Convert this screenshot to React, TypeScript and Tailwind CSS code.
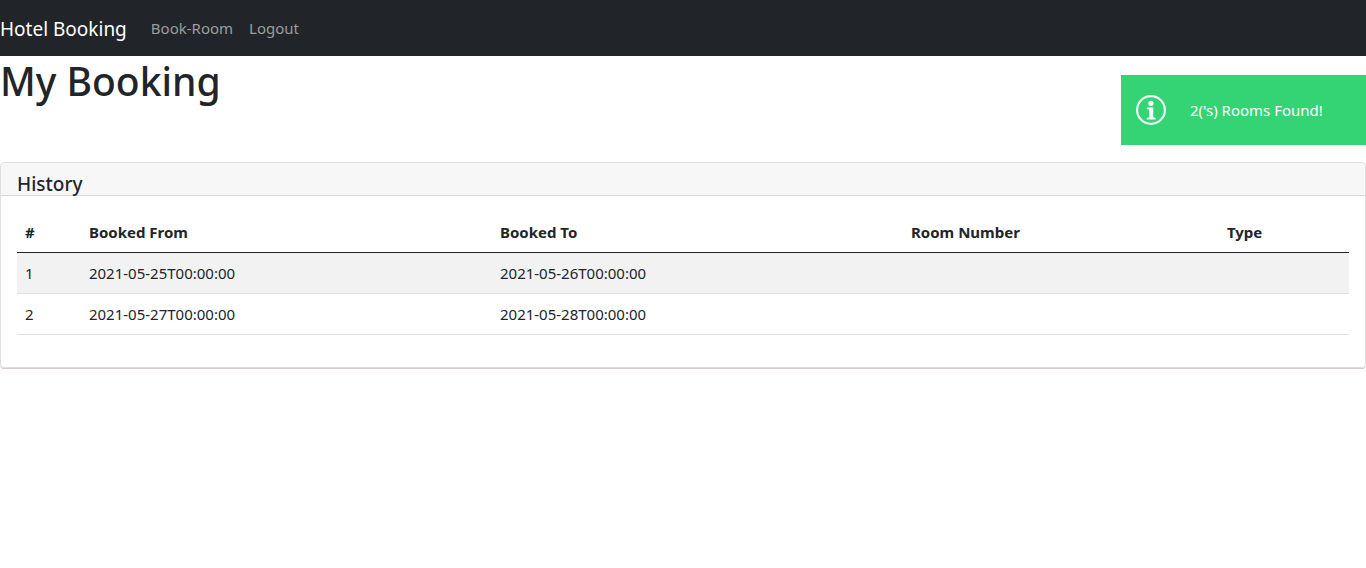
const bookings = [
  { id: 1, from: "2021-05-25T00:00:00", to: "2021-05-26T00:00:00", room: "", type: "" },
  { id: 2, from: "2021-05-27T00:00:00", to: "2021-05-28T00:00:00", room: "", type: "" },
];

function InfoIcon() {
  return (
    <svg className="size-[30px] shrink-0" viewBox="0 0 30 30" aria-hidden="true">
      <circle cx="15" cy="15" r="13.9" fill="none" stroke="#fff" strokeOpacity="0.9" strokeWidth="2.2" />
      <circle cx="14.9" cy="8.4" r="2.6" fill="#fff" fillOpacity="0.95" />
      <path d="M10.8 12.4h6.5v9.8l2.4.7v1.5h-9v-1.5l2.5-.7v-7.5l-2.4-.7z" fill="#fff" fillOpacity="0.95" />
    </svg>
  );
}

function Navbar() {
  return (
    <nav className="flex h-14 items-center bg-[#212529]">
      <a href="#" className="mr-4 pt-0.5 text-[19px] leading-[30px] text-white">
        Hotel Booking
      </a>
      <a href="#book-room" className="px-2 text-[#9b9d9e]">
        Book-Room
      </a>
      <a href="#logout" className="px-2 text-[#9b9d9e]">
        Logout
      </a>
    </nav>
  );
}

function Toast() {
  return (
    <div
      role="status"
      className="fixed top-[75px] right-0 flex h-[70px] min-w-[245px] items-center gap-6 bg-[#34d373] pr-9 pl-[15px] text-white"
    >
      <InfoIcon />
      <span>2('s) Rooms Found!</span>
    </div>
  );
}

export default function App() {
  return (
    <div className="min-h-screen bg-white font-['Noto_Sans','Open_Sans',sans-serif] text-[15px] leading-6 text-[#212529]">
      <Navbar />
      <h1 className="mb-14 text-[39px] leading-[50px] font-medium">My Booking</h1>
      <section className="rounded-sm border border-[#dfdfdf] pb-4 shadow-[0_1px_0_#d9c9cb]">
        <header className="h-[33px] rounded-t-sm border-b border-[#d8d8d8] bg-[#f7f7f7] px-4 pt-2">
          <h2 className="text-[19px] leading-[26px] font-medium">History</h2>
        </header>
        <div className="p-4">
          <table className="w-full table-fixed border-collapse text-left">
            <colgroup>
              <col className="w-[4.8%]" />
              <col className="w-[30.86%]" />
              <col className="w-[30.86%]" />
              <col className="w-[23.72%]" />
              <col className="w-[9.76%]" />
            </colgroup>
            <thead>
              <tr className="border-b border-[#212529]">
                <th className="p-2">#</th>
                <th className="p-2">Booked From</th>
                <th className="p-2">Booked To</th>
                <th className="p-2">Room Number</th>
                <th className="p-2">Type</th>
              </tr>
            </thead>
            <tbody>
              {bookings.map((b) => (
                <tr key={b.id} className="border-b border-[#dee2e6] odd:bg-[#f2f2f2]">
                  <td className="p-2">{b.id}</td>
                  <td className="p-2">{b.from}</td>
                  <td className="p-2">{b.to}</td>
                  <td className="p-2">{b.room}</td>
                  <td className="p-2">{b.type}</td>
                </tr>
              ))}
            </tbody>
          </table>
        </div>
      </section>
      <Toast />
    </div>
  );
}
